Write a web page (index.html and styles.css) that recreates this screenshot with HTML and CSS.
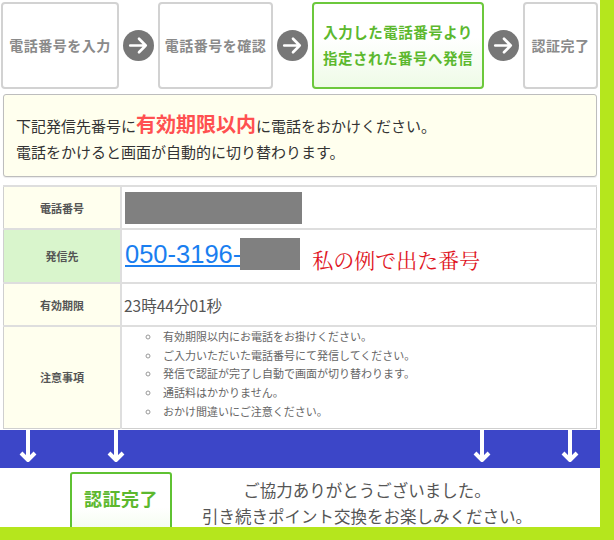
FILE: index.html
```html
<!DOCTYPE html>
<html lang="ja">
<head>
<meta charset="utf-8">
<link rel="stylesheet" href="styles.css">
</head>
<body>
<div class="frame">
  <div class="steps">
    <div class="step w1">電話番号を入力</div>
    <span class="next"><svg viewBox="0 0 30 30" width="31" height="31"><circle cx="15" cy="15" r="15" fill="#777"/><path d="M7 15 H22 M15.5 8.5 L22 15 L15.5 21.5" fill="none" stroke="#fff" stroke-width="2.6" stroke-linecap="round" stroke-linejoin="round"/></svg></span>
    <div class="step w2">電話番号を確認</div>
    <span class="next"><svg viewBox="0 0 30 30" width="31" height="31"><circle cx="15" cy="15" r="15" fill="#777"/><path d="M7 15 H22 M15.5 8.5 L22 15 L15.5 21.5" fill="none" stroke="#fff" stroke-width="2.6" stroke-linecap="round" stroke-linejoin="round"/></svg></span>
    <div class="step w3 active">入力した電話番号より<br>指定された番号へ発信</div>
    <span class="next"><svg viewBox="0 0 30 30" width="31" height="31"><circle cx="15" cy="15" r="15" fill="#777"/><path d="M7 15 H22 M15.5 8.5 L22 15 L15.5 21.5" fill="none" stroke="#fff" stroke-width="2.6" stroke-linecap="round" stroke-linejoin="round"/></svg></span>
    <div class="step w4">認証完了</div>
  </div>

  <div class="notice">
    <p>下記発信先番号に<span class="em">有効期限以内</span>に電話をおかけください。</p>
    <p>電話をかけると画面が自動的に切り替わります。</p>
  </div>

  <table class="info">
    <tr class="r1">
      <th>電話番号</th>
      <td><span class="mask m1"></span></td>
    </tr>
    <tr class="r2">
      <th class="green">発信先</th>
      <td><span class="tel"><a href="#">050-3196-</a><span class="mask m2"></span></span><span class="note">私の例で出た番号</span></td>
    </tr>
    <tr class="r3">
      <th>有効期限</th>
      <td class="time">23時44分01秒</td>
    </tr>
    <tr class="r4">
      <th>注意事項</th>
      <td>
        <ul class="rules">
          <li>有効期限以内にお電話をお掛けください。</li>
          <li>ご入力いただいた電話番号にて発信してください。</li>
          <li>発信で認証が完了し自動で画面が切り替わります。</li>
          <li>通話料はかかりません。</li>
          <li>おかけ間違いにご注意ください。</li>
        </ul>
      </td>
    </tr>
  </table>

  <div class="band">
    <div class="grp">
      <svg class="down" viewBox="0 0 20 34" width="20" height="34"><path d="M10 0 V30 M3 23 L10 30 L17 23" fill="none" stroke="#fff" stroke-width="4" stroke-linejoin="round"/></svg>
      <svg class="down" viewBox="0 0 20 34" width="20" height="34"><path d="M10 0 V30 M3 23 L10 30 L17 23" fill="none" stroke="#fff" stroke-width="4" stroke-linejoin="round"/></svg>
    </div>
    <div class="grp">
      <svg class="down" viewBox="0 0 20 34" width="20" height="34"><path d="M10 0 V30 M3 23 L10 30 L17 23" fill="none" stroke="#fff" stroke-width="4" stroke-linejoin="round"/></svg>
      <svg class="down" viewBox="0 0 20 34" width="20" height="34"><path d="M10 0 V30 M3 23 L10 30 L17 23" fill="none" stroke="#fff" stroke-width="4" stroke-linejoin="round"/></svg>
    </div>
  </div>

  <div class="done">
    <div class="done-box">認証完了</div>
    <div class="thanks">
      <p>ご協力ありがとうございました。</p>
      <p>引き続きポイント交換をお楽しみください。</p>
    </div>
  </div>
</div>
</body>
</html>
```

FILE: styles.css
```css
html, body {
  margin: 0;
  padding: 0;
}
body {
  background: #b5e61d;
  width: 614px;
  height: 540px;
  overflow: hidden;
  font-family: "Noto Sans CJK JP", "Noto Sans", sans-serif;
  color: #444;
}
.frame {
  width: 600px;
  height: 527px;
  background: #fff;
  overflow: hidden;
}

/* steps */
.steps {
  display: flex;
  align-items: center;
  gap: 4px;
  height: 89px;
  padding: 1px 0 0 1px;
  box-sizing: border-box;
}
.step {
  height: 87px;
  box-sizing: border-box;
  border: 2px solid #d2d2d2;
  border-radius: 4px;
  display: flex;
  align-items: center;
  justify-content: center;
  text-align: center;
  font-size: 14px;
  font-weight: bold;
  color: #8a8a8a;
  letter-spacing: 0.5px;
  line-height: 26px;
}
.w1 { width: 118px; }
.w2 { width: 115px; }
.w3 { width: 172px; }
.w4 { width: 75px; }
.step.active {
  border-color: #6cc83c;
  color: #5cb82e;
  font-size: 14.5px;
  background: linear-gradient(#ffffff 40%, #eefbe6);
}
.next {
  display: flex;
  width: 31px;
  height: 31px;
}

/* notice */
.notice {
  margin: 5px 3px 0;
  height: 83px;
  box-sizing: border-box;
  border: 1px solid #bdbdbd;
  border-radius: 3px;
  background: #ffffee;
  padding: 18px 12px 0;
  box-shadow: 0 1px 1px rgba(0,0,0,0.08);
}
.notice p {
  margin: 0;
  font-size: 15px;
  line-height: 26px;
  color: #333;
}
.notice .em {
  color: #ff5050;
  font-size: 20px;
  font-weight: bold;
  line-height: 1;
}

/* table */
.info {
  margin: 8px 3px 0;
  width: 594px;
  border-collapse: collapse;
  border: 1px solid #cfcfcf;
}
.info th, .info td {
  border-top: 2px solid #dedede;
  padding: 0;
  vertical-align: middle;
}
.info th {
  width: 116px;
  background: #ffffee;
  font-size: 11px;
  font-weight: bold;
  color: #555;
  border-right: 2px solid #dedede;
}
.info th.green {
  background: #d9f5cc;
}
.r1 th, .r1 td { height: 41px; }
.r2 th, .r2 td { height: 52px; }
.r3 th, .r3 td { height: 41px; }
.r4 th, .r4 td { height: 100px; }

.info td {
  padding-left: 3px;
}
.mask {
  display: inline-block;
  background: #808080;
  height: 32px;
  vertical-align: middle;
}
.m1 { width: 177px; }
.m2 { width: 60px; }
.tel {
  display: inline-flex;
  align-items: center;
}
.tel a {
  font-family: "Liberation Sans", Arial, sans-serif;
  font-size: 25.5px;
  color: #1a7ef0;
  text-decoration: underline;
  margin-right: -1px;
}
.note {
  display: inline-block;
  vertical-align: middle;
  margin-left: 12px;
  font-family: "Noto Serif CJK JP", "IPAMincho", serif;
  font-size: 21px;
  color: #e0141e;
}
.info td.time {
  font-size: 15.5px;
  color: #555;
  padding-left: 2px;
}
.rules {
  margin: 0;
  padding: 0 0 7px 36px;
  list-style: circle;
  font-size: 11px;
  line-height: 18.7px;
  color: #666;
}
.rules li {
  padding-left: 2px;
}
.rules li::marker {
  color: #999;
}

/* blue band */
.band {
  margin-top: 1px;
  height: 38px;
  background: #3c46c8;
  display: flex;
  justify-content: space-between;
  padding: 0 20px 0 18px;
}
.grp {
  display: flex;
  gap: 68px;
}
.down {
  display: block;
}

/* bottom */
.done {
  display: flex;
  padding: 4px 38px 0 70px;
}
.done-box {
  width: 102px;
  height: 70px;
  box-sizing: border-box;
  border: 2px solid #5fc232;
  border-radius: 3px;
  background: linear-gradient(#ffffff 50%, #effbe8);
  color: #5cb82e;
  font-size: 18px;
  font-weight: bold;
  text-align: center;
  padding-top: 11px;
  letter-spacing: 0.5px;
}
.thanks {
  flex: 1;
  text-align: center;
  padding-top: 5px;
}
.thanks p {
  margin: 0;
  font-size: 16.5px;
  line-height: 26px;
  color: #555;
}
```
